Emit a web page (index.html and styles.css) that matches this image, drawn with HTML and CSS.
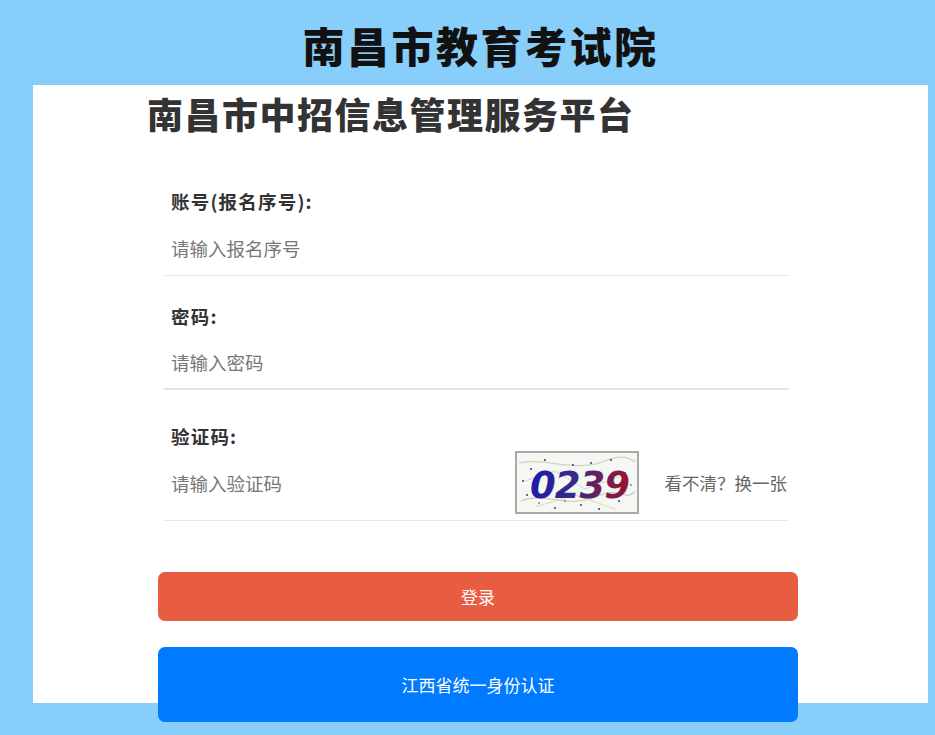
FILE: index.html
```html
<!DOCTYPE html>
<html lang="zh-CN">
<head>
<meta charset="utf-8">
<title>南昌市中招信息管理服务平台</title>
<link rel="stylesheet" href="styles.css">
</head>
<body>
<header class="top">
  <h1 class="site-title">南昌市教育考试院</h1>
</header>
<main class="panel">
  <h2 class="sub-title">南昌市中招信息管理服务平台</h2>
  <form class="form">
    <div class="field first">
      <div class="label">账号(报名序号):</div>
      <div class="input-row"><span class="placeholder">请输入报名序号</span></div>
    </div>
    <div class="field second">
      <div class="label">密码:</div>
      <div class="input-row"><span class="placeholder">请输入密码</span></div>
    </div>
    <div class="field third">
      <div class="label">验证码:</div>
      <div class="input-row captcha-row">
        <span class="placeholder grow">请输入验证码</span>
        <svg class="captcha" width="124" height="63" viewBox="0 0 124 63">
          <defs>
            <linearGradient id="cg" x1="0" y1="0" x2="1" y2="0">
              <stop offset="0" stop-color="#1d1aa8"/>
              <stop offset="0.45" stop-color="#3a2a8a"/>
              <stop offset="0.7" stop-color="#6a1f5a"/>
              <stop offset="1" stop-color="#9a1530"/>
            </linearGradient>
          </defs>
          <rect x="1" y="1" width="122" height="61" fill="#f5f7f2" stroke="#a9a9a9" stroke-width="2"/>
          <path d="M4 12 C30 6 60 22 90 10 S118 18 120 8" stroke="#c8d6c0" stroke-width="1.2" fill="none"/>
          <path d="M6 50 C30 40 50 58 80 46 S110 52 120 40" stroke="#d8c8b8" stroke-width="1.2" fill="none"/>
          <path d="M10 30 L40 20 L70 38 L110 24" stroke="#cdd8e6" stroke-width="1" fill="none"/>
          <path d="M20 56 L60 44 L100 58" stroke="#e0d6c0" stroke-width="1" fill="none"/>
          <g fill="#3a3a6a">
            <circle cx="30" cy="9" r="1"/><circle cx="58" cy="14" r="1"/><circle cx="96" cy="9" r="1"/>
            <circle cx="110" cy="22" r="1"/><circle cx="12" cy="44" r="1"/><circle cx="40" cy="57" r="1"/>
            <circle cx="66" cy="54" r="1"/><circle cx="84" cy="58" r="1"/><circle cx="16" cy="18" r="1"/>
            <circle cx="104" cy="50" r="1"/><circle cx="76" cy="12" r="1"/><circle cx="8" cy="30" r="1"/>
            <circle cx="50" cy="50" r="0.8"/><circle cx="116" cy="34" r="0.8"/><circle cx="24" cy="52" r="0.8"/>
          </g>
          <text x="15" y="47" class="captcha-text" fill="url(#cg)">0239</text>
        </svg>
        <span class="refresh">看不清？换一张</span>
      </div>
    </div>
    <button type="button" class="btn btn-login">登录</button>
    <button type="button" class="btn btn-auth">江西省统一身份认证</button>
  </form>
</main>
</body>
</html>
```
FILE: styles.css
```css
* { box-sizing: border-box; }
html, body { margin: 0; padding: 0; }
body {
  background: #87cefa;
  font-family: "Noto Sans CJK SC", "Noto Sans", sans-serif;
  width: 935px;
  height: 735px;
  overflow: hidden;
}
.top {
  height: 85px;
  display: flex;
  justify-content: center;
  padding-left: 26px;
}
.site-title {
  margin: 0;
  font-size: 42px;
  line-height: 50px;
  padding-top: 20px;
  font-weight: 900;
  color: #111;
  letter-spacing: 2.5px;
}
.panel {
  margin-left: 33px;
  width: 895px;
  height: 618px;
  background: #fff;
  padding-left: 114px;
}
.sub-title {
  margin: 0;
  padding-top: 6px;
  font-size: 36px;
  line-height: 44px;
  font-weight: 900;
  color: #333;
  letter-spacing: 1.5px;
}
.form {
  margin-left: 11px;
  width: 640px;
}
.field {
  margin: 0 9px 0 6px;
  border-bottom: 1px solid #e8e8e8;
}
.field.first { padding-top: 54px; }
.field.second { padding-top: 28px; border-bottom: 2px solid #e2e2e2; }
.field.third { padding-top: 34px; }
.field.first .input-row { height: 54px; }
.label {
  padding-left: 7px;
  font-size: 18.5px;
  line-height: 24px;
  font-weight: 700;
  color: #333;
  letter-spacing: 1.2px;
}
.input-row {
  display: flex;
  align-items: center;
  height: 52px;
  margin-top: 8px;
  padding-left: 7px;
}
.placeholder {
  font-size: 18.5px;
  color: #777;
}
.captcha-row {
  height: auto;
  margin-top: 3px;
  padding-bottom: 6px;
}
.grow { flex: 1; }
.captcha { display: block; }
.captcha-text {
  font-family: "DejaVu Sans", sans-serif;
  font-weight: 700;
  font-style: italic;
  font-size: 37px;
  letter-spacing: -1px;
}
.refresh {
  margin-left: 26px;
  font-size: 17.5px;
  color: #666;
  margin-right: 2px;
}
.btn {
  display: block;
  width: 640px;
  border: 0;
  border-radius: 7px;
  color: #fff;
  font-family: "Noto Sans CJK SC", "Noto Sans", sans-serif;
  font-size: 17px;
  padding: 0;
}
.btn-login {
  margin-top: 51px;
  height: 49px;
  background: #e85c41;
}
.btn-auth {
  margin-top: 26px;
  height: 75px;
  background: #007aff;
}
```
